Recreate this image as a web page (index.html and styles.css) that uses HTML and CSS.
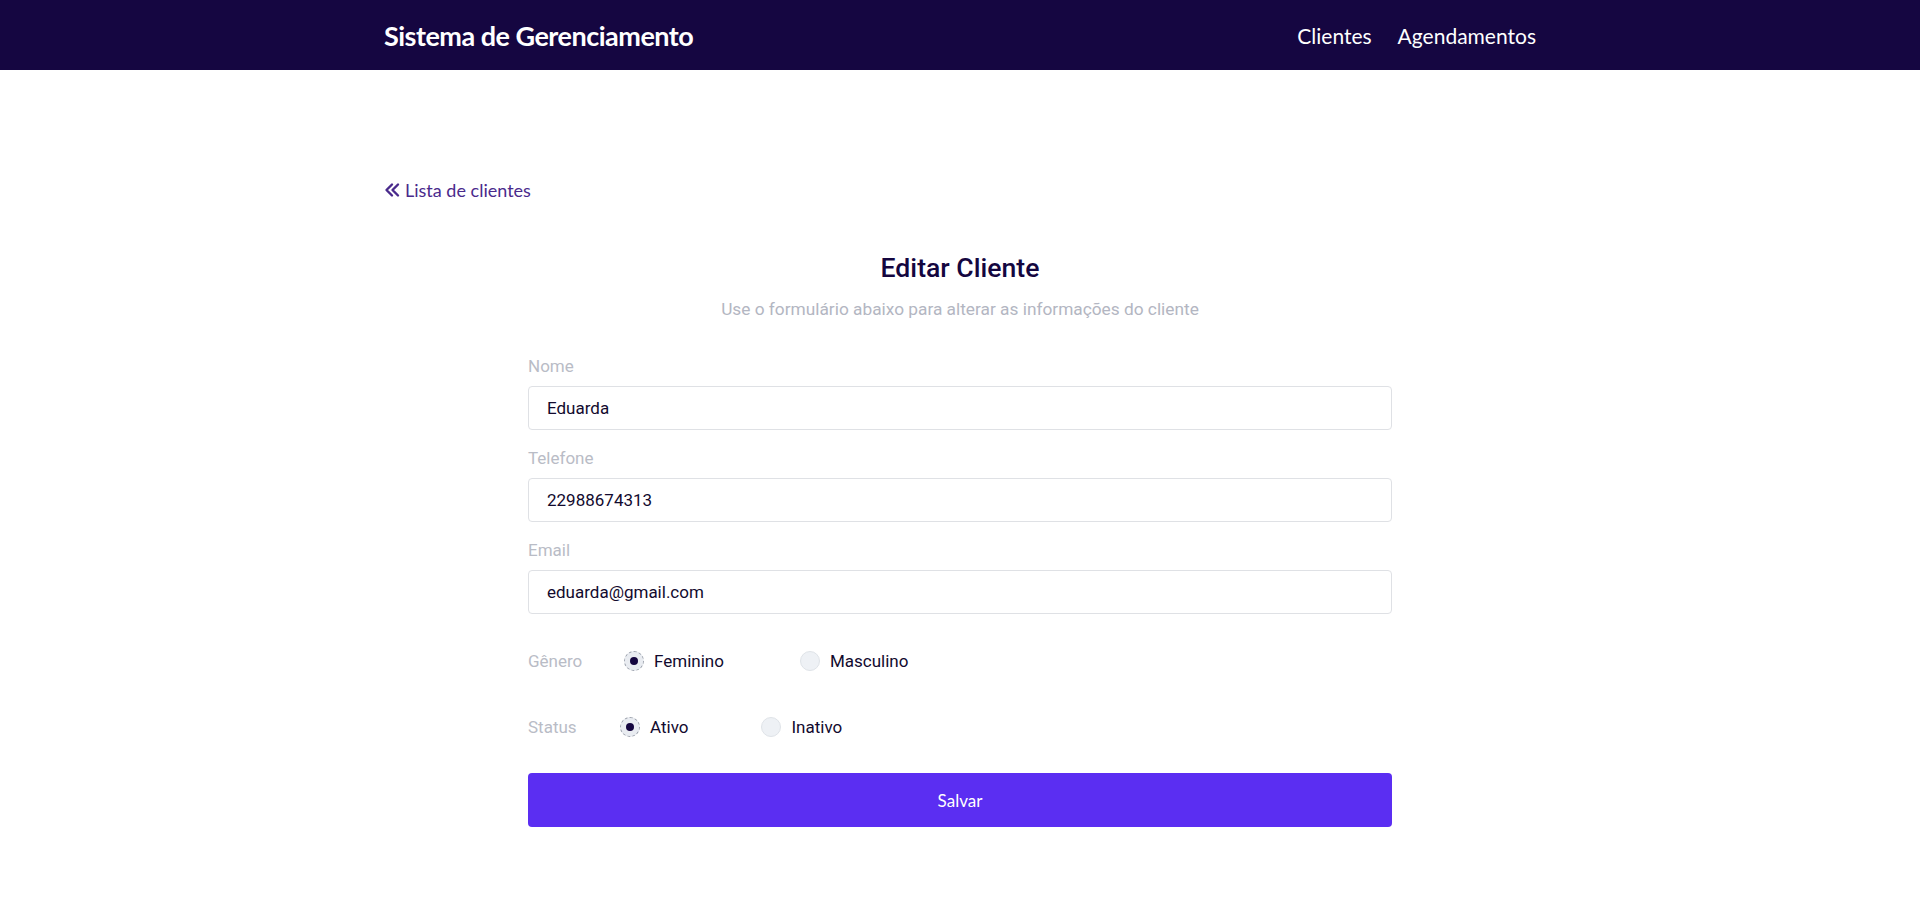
FILE: index.html
```html
<!DOCTYPE html>
<html lang="pt-BR">
<head>
<meta charset="utf-8">
<title>Sistema de Gerenciamento</title>
<link rel="stylesheet" href="styles.css">
</head>
<body>
<header class="navbar">
  <div class="container nav-inner">
    <a class="brand" href="#">Sistema de Gerenciamento</a>
    <nav class="nav-links">
      <a href="#">Clientes</a>
      <a href="#">Agendamentos</a>
    </nav>
  </div>
</header>
<main class="container page">
  <a class="back-link" href="#">
    <svg class="back-icon" viewBox="0 0 16 16" width="16" height="16" aria-hidden="true">
      <path d="M8 2.5 L2.5 8 L8 13.5 M14 2.5 L8.5 8 L14 13.5" fill="none" stroke="currentColor" stroke-width="2.4" stroke-linecap="round" stroke-linejoin="round"/>
    </svg>
    <span>Lista de clientes</span>
  </a>
  <section class="form-wrap">
    <h1 class="title">Editar Cliente</h1>
    <p class="subtitle">Use o formulário abaixo para alterar as informações do cliente</p>
    <form class="form">
      <label class="field-label">Nome</label>
      <div class="input">Eduarda</div>
      <label class="field-label">Telefone</label>
      <div class="input">22988674313</div>
      <label class="field-label">Email</label>
      <div class="input">eduarda@gmail.com</div>

      <div class="radio-row row-genero">
        <span class="row-label">Gênero</span>
        <div class="options">
          <span class="opt opt-fem"><span class="radio checked"></span>Feminino</span>
          <span class="opt"><span class="radio"></span>Masculino</span>
        </div>
      </div>
      <div class="radio-row row-status">
        <span class="row-label">Status</span>
        <div class="options">
          <span class="opt opt-ativo"><span class="radio checked"></span>Ativo</span>
          <span class="opt"><span class="radio"></span>Inativo</span>
        </div>
      </div>
      <button class="btn" type="button">Salvar</button>
    </form>
  </section>
</main>
</body>
</html>
```

FILE: styles.css
```css
* { box-sizing: border-box; }
html, body { margin: 0; padding: 0; background: #fff; }
body { font-family: Roboto, "Noto Sans", sans-serif; color: #14063f; }
a { text-decoration: none; }

.container { width: 1152px; margin: 0 auto; }

.navbar { background: #150641; height: 70px; }
.nav-inner { height: 70px; display: flex; align-items: center; justify-content: space-between; }
.brand { color: #fff; font-family: Lato, "Open Sans", sans-serif; font-weight: 700; font-size: 27px; letter-spacing: -0.5px; }
.nav-links { display: flex; gap: 26px; }
.nav-links a { color: #fff; font-family: Lato, "Open Sans", sans-serif; font-size: 21px; }

.page { padding-top: 108px; }
.back-link { display: inline-flex; align-items: center; gap: 5px; color: #4a2a8c; font-family: Lato, "Open Sans", sans-serif; font-size: 18px; line-height: 24px; }
.back-icon { width: 16px; height: 16px; }

.form-wrap { width: 864px; margin: 50px auto 0; }
.title { margin: 0; text-align: center; font-size: 26.6px; line-height: 32px; font-weight: 500; color: #14063f; }
.subtitle { margin: 13px 0 0; text-align: center; font-size: 17.3px; line-height: 24px; color: #b3b6c2; }

.form { display: flex; flex-direction: column; margin-top: 33px; }
.field-label { font-size: 17px; line-height: 24px; color: #b9bcc6; margin-bottom: 8px; }
.input { height: 44px; border: 1px solid #dfe1e5; border-radius: 4px; padding: 0 18px; display: flex; align-items: center; font-size: 17px; color: #120a2e; margin-bottom: 16px; }
.input:last-of-type { margin-bottom: 0; }

.radio-row { display: flex; align-items: center; height: 24px; font-size: 17px; }
.row-genero { margin-top: 19px; }
.row-status { margin-top: 42px; }
.row-label { color: #b9bcc6; }
.row-genero .row-label { width: 96px; }
.row-status .row-label { width: 92px; }
.options { display: flex; align-items: center; }
.opt { display: inline-flex; align-items: center; gap: 10px; color: #120a2e; }
.opt-fem { margin-right: 76px; }
.opt-ativo { margin-right: 73px; }
.radio { width: 20px; height: 20px; border-radius: 50%; background: #eef1f5; border: 1px solid #dfe3e8; display: inline-flex; align-items: center; justify-content: center; }
.radio.checked { background: #e9ecf1; border: 1px dashed #9aa0ab; }
.radio.checked::after { content: ""; width: 8px; height: 8px; border-radius: 50%; background: #14063f; }

.btn { margin-top: 34px; height: 54px; border: 0; border-radius: 4px; background: #5b2ef2; color: #fff; font-family: Lato, "Open Sans", sans-serif; font-size: 17px; cursor: pointer; }
```
